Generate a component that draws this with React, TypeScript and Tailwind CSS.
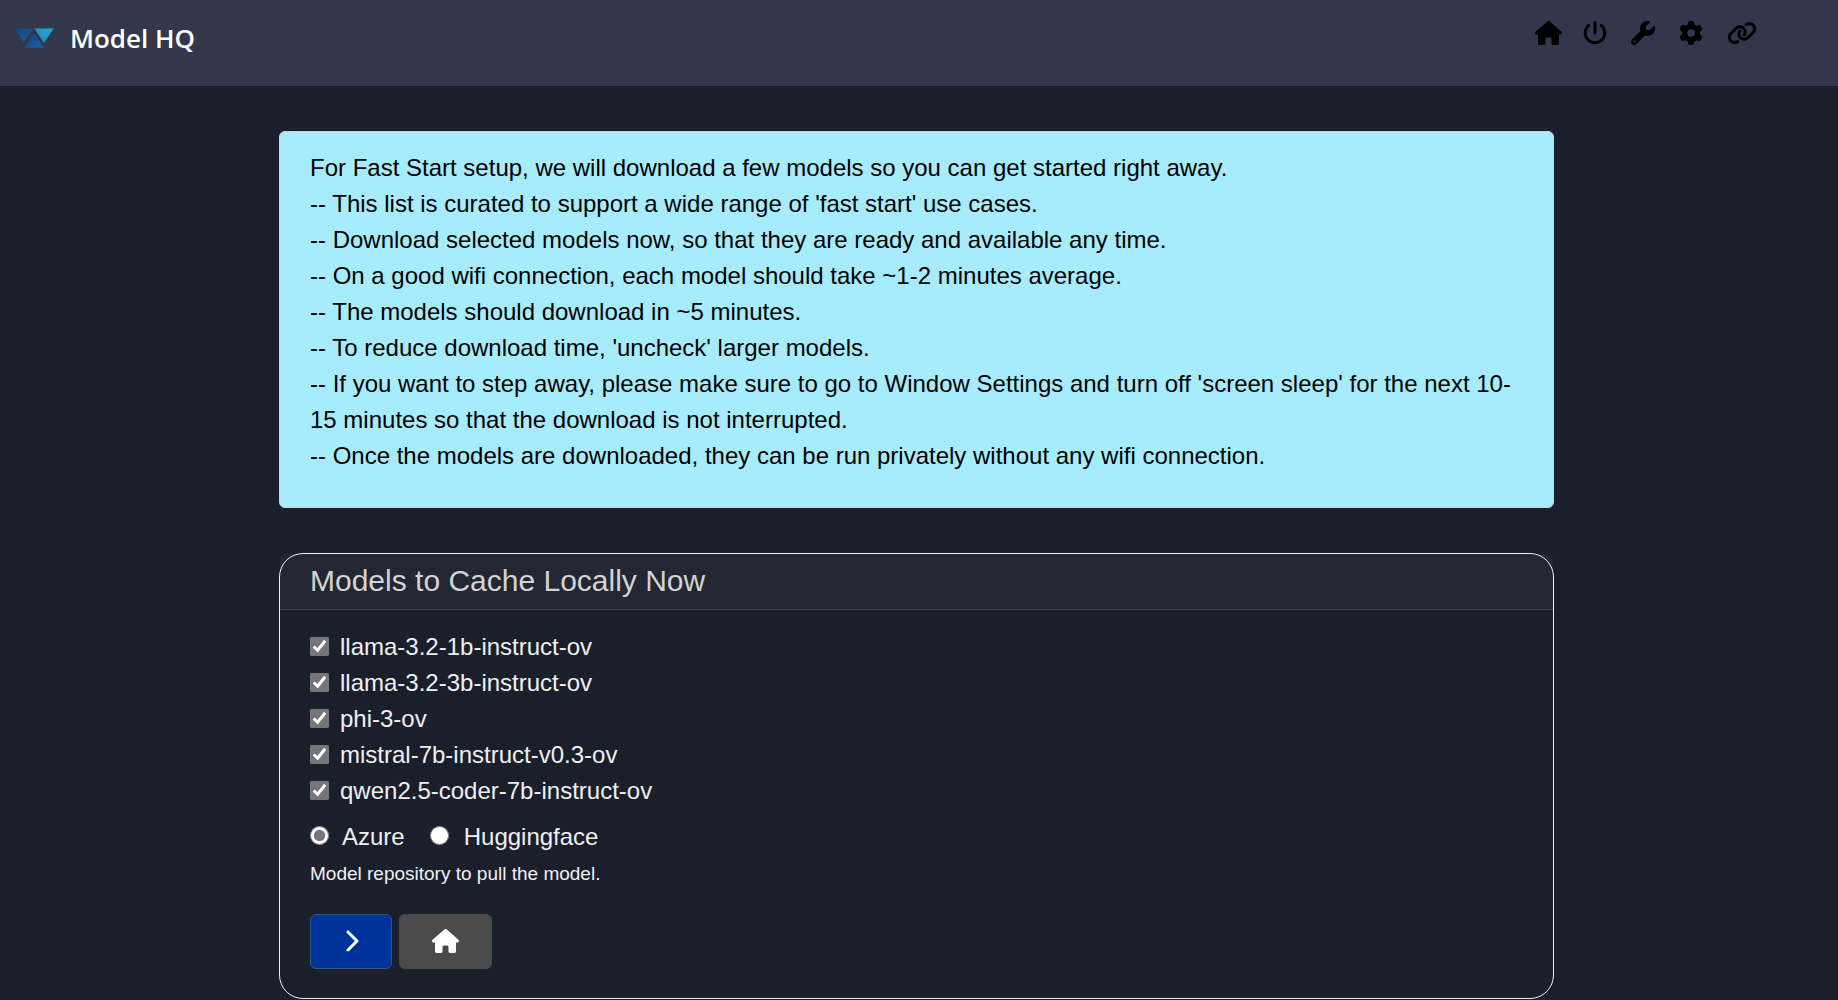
import { FaHouse, FaPowerOff, FaWrench, FaGear, FaLink, FaChevronRight } from "react-icons/fa6";

const notes = [
  "For Fast Start setup, we will download a few models so you can get started right away.",
  "-- This list is curated to support a wide range of 'fast start' use cases.",
  "-- Download selected models now, so that they are ready and available any time.",
  "-- On a good wifi connection, each model should take ~1-2 minutes average.",
  "-- The models should download in ~5 minutes.",
  "-- To reduce download time, 'uncheck' larger models.",
  "-- If you want to step away, please make sure to go to Window Settings and turn off 'screen sleep' for the next 10-15 minutes so that the download is not interrupted.",
  "-- Once the models are downloaded, they can be run privately without any wifi connection.",
];

const models = [
  "llama-3.2-1b-instruct-ov",
  "llama-3.2-3b-instruct-ov",
  "phi-3-ov",
  "mistral-7b-instruct-v0.3-ov",
  "qwen2.5-coder-7b-instruct-ov",
];

const links = [
  { label: "Home", Icon: FaHouse, size: "h-6 w-[27px]" },
  { label: "Exit", Icon: FaPowerOff, size: "h-6 w-6" },
  { label: "Tools", Icon: FaWrench, size: "h-6 w-6" },
  { label: "Settings", Icon: FaGear, size: "h-6 w-6" },
  { label: "Links", Icon: FaLink, size: "h-6 w-[30px]" },
];

function Logo() {
  return (
    <svg viewBox="0 0 40 20" className="h-5 w-10" aria-hidden="true">
      <defs>
        <linearGradient id="deep" x1="0" y1="0" x2="1" y2="1">
          <stop offset="0" stopColor="#15447c" />
          <stop offset="1" stopColor="#1b5f9f" />
        </linearGradient>
        <linearGradient id="bright" x1="0" y1="1" x2="1" y2="0">
          <stop offset="0" stopColor="#1b86bd" />
          <stop offset="1" stopColor="#22acd2" />
        </linearGradient>
      </defs>
      <path d="M0.5 0.500H19L10 14Z" fill="url(#deep)" />
      <path d="M20 4.500L30.500 20H10.500Z" fill="url(#deep)" stroke="#32374c" strokeWidth="0.500" />
      <path d="M20.500 0.500H39.500L30 15Z" fill="url(#bright)" />
    </svg>
  );
}

function Header() {
  return (
    <header className="flex h-[86px] items-start justify-between bg-[#32374c] pr-[63px] pl-3.5">
      <a href="#" className="mt-[18px] flex items-center gap-4 font-['Open_Sans',sans-serif] text-[26px] leading-10 font-semibold text-white">
        <Logo />
        Model HQ
      </a>
      <nav className="mt-[21px] flex text-black">
        {links.map(({ label, Icon, size }) => (
          <a key={label} href="#" aria-label={label} className="w-12">
            <Icon className={size} />
          </a>
        ))}
      </nav>
    </header>
  );
}

export default function App() {
  return (
    <div className="min-h-screen bg-[#1a1f2c] font-['Liberation_Sans',Arial,sans-serif] text-2xl leading-9">
      <Header />
      <div className="pr-[5px]">
        <main className="mx-auto flex w-full max-w-[1275px] flex-col gap-[45px] pt-[45px]">
          <section className="rounded-md border border-[#d3d3d3] bg-[#a7ecfc] px-[30px] pt-[18px] pb-[33px] text-black">
            {notes.map((note) => (
              <p key={note}>{note}</p>
            ))}
          </section>

          <section className="rounded-3xl border border-[#f0f0f0]">
            <h1 className="rounded-t-md border-b border-[#3f4150] bg-white/[0.035] px-[30px] pt-[9px] pb-2.5 text-[30px] text-[#d3d3d3]">
              Models to Cache Locally Now
            </h1>
            <form className="px-[30px] pt-[19px] pb-[29px] text-[#f0f0f0]">
              {models.map((model) => (
                <label key={model} className="flex items-center gap-[11px]">
                  <input
                    type="checkbox"
                    defaultChecked
                    className="mb-0.5 h-[19px] w-[19px] accent-[#767676]"
                  />
                  {model}
                </label>
              ))}
              <div className="mt-2.5 flex gap-[25px]">
                <label className="flex items-center gap-[13px]">
                  <input type="radio" name="repo" defaultChecked className="mb-1 h-[19px] w-[19px] accent-[#767676]" />
                  Azure
                </label>
                <label className="flex items-center gap-[15px]">
                  <input type="radio" name="repo" className="mb-1 h-[19px] w-[19px]" />
                  Huggingface
                </label>
              </div>
              <p className="mt-[5px] text-[19px] leading-7">Model repository to pull the model.</p>
              <div className="mt-[26px] flex gap-[7px] text-white">
                <button type="submit" aria-label="Next" className="flex h-[55px] w-[82px] items-center justify-center rounded-md border border-[#2a5a8c] bg-[#003399] pb-0.5">
                  <FaChevronRight />
                </button>
                <button type="button" aria-label="Home" className="flex h-[55px] w-[93px] items-center justify-center rounded-md bg-[#4a4a4a] pb-0.5">
                  <FaHouse className="h-6 w-[27px]" />
                </button>
              </div>
            </form>
          </section>
        </main>
      </div>
    </div>
  );
}
